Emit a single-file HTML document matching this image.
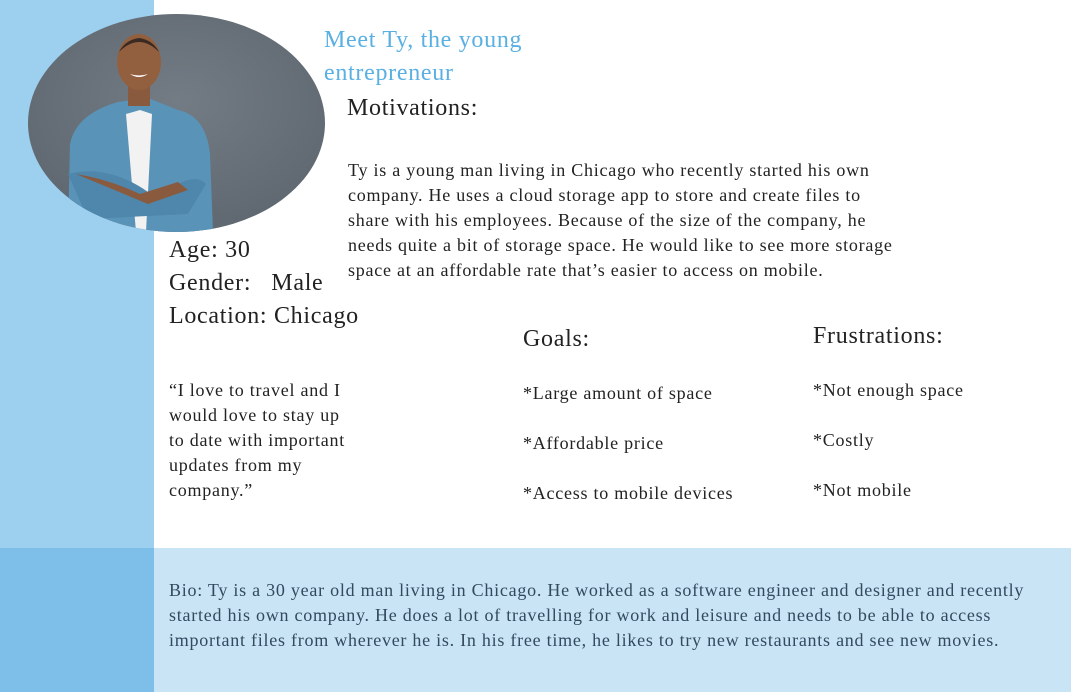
<!DOCTYPE html>
<html><head><meta charset="utf-8"><style>
body{margin:0;width:1071px;height:692px;position:relative;overflow:hidden;background:#fff;font-family:"Liberation Serif",serif;color:#222}
.a{position:absolute;white-space:nowrap}
.p{font-size:18px;line-height:25px;letter-spacing:0.75px}
.h{font-size:24px;letter-spacing:0.7px}
</style></head><body>
<div class="a" style="left:0;top:0;width:154px;height:548px;background:#9dcfee"></div>
<div class="a" style="left:0;top:548px;width:154px;height:144px;background:#7dbfe8"></div>
<div class="a" style="left:154px;top:548px;width:917px;height:144px;background:#c8e4f5"></div>
<svg class="a" style="left:28px;top:14px" width="297" height="218" viewBox="0 0 297 218">
<defs><clipPath id="c"><ellipse cx="148.5" cy="109" rx="148.5" ry="109"/></clipPath>
<radialGradient id="g" cx="0.5" cy="0.4" r="0.7"><stop offset="0" stop-color="#737c84"/><stop offset="1" stop-color="#5c656d"/></radialGradient></defs>
<g clip-path="url(#c)">
<rect width="297" height="218" fill="url(#g)"/>
<path d="M40 218 L42 130 Q48 100 90 88 L120 84 L150 96 Q178 102 182 140 L185 218 Z" fill="#5a93b8"/>
<path d="M98 100 L112 96 L124 100 L118 218 L108 218 Z" fill="#f2f2f2"/>
<path d="M40 160 Q80 150 120 178 L150 170 Q170 160 178 170 L160 200 L60 205 Z" fill="#4f86ab"/>
<path d="M48 160 Q80 165 112 180 L150 168 L160 176 L120 190 Z" fill="#8a5a3e"/>
<rect x="100" y="62" width="22" height="30" fill="#8a5a3e"/>
<ellipse cx="111" cy="48" rx="22" ry="28" fill="#93603f"/>
<path d="M91 38 Q111 18 131 38 Q125 26 111 24 Q97 26 91 38Z" fill="#3a2a22"/>
<path d="M102 60 Q111 66 120 60 Q111 63 102 60Z" fill="#fff"/>
</g></svg>
<div class="a h" style="left:324px;top:24px;line-height:33px;color:#5ab0e2">Meet Ty, the young<br>entrepreneur</div>
<div class="a h" style="left:347px;top:95px">Motivations:</div>
<div class="a p" style="left:348px;top:158px">Ty is a young man living in Chicago who recently started his own<br>company. He uses a cloud storage app to store and create files to<br>share with his employees. Because of the size of the company, he<br>needs quite a bit of storage space. He would like to see more storage<br>space at an affordable rate that’s easier to access on mobile.</div>
<div class="a h" style="left:169px;top:234px;line-height:33px">Age: 30<br>Gender:&nbsp;&nbsp; Male<br>Location: Chicago</div>
<div class="a p" style="left:169px;top:378px">“I love to travel and I<br>would love to stay up<br>to date with important<br>updates from my<br>company.”</div>
<div class="a h" style="left:523px;top:326px">Goals:</div>
<div class="a p" style="left:523px;top:368px;line-height:50px">*Large amount of space<br>*Affordable price<br>*Access to mobile devices</div>
<div class="a h" style="left:813px;top:323px">Frustrations:</div>
<div class="a p" style="left:813px;top:365px;line-height:50px">*Not enough space<br>*Costly<br>*Not mobile</div>
<div class="a p" style="left:169px;top:578px;color:#34495e">Bio: Ty is a 30 year old man living in Chicago. He worked as a software engineer and designer and recently<br>started his own company. He does a lot of travelling for work and leisure and needs to be able to access<br>important files from wherever he is. In his free time, he likes to try new restaurants and see new movies.</div>
</body></html>
